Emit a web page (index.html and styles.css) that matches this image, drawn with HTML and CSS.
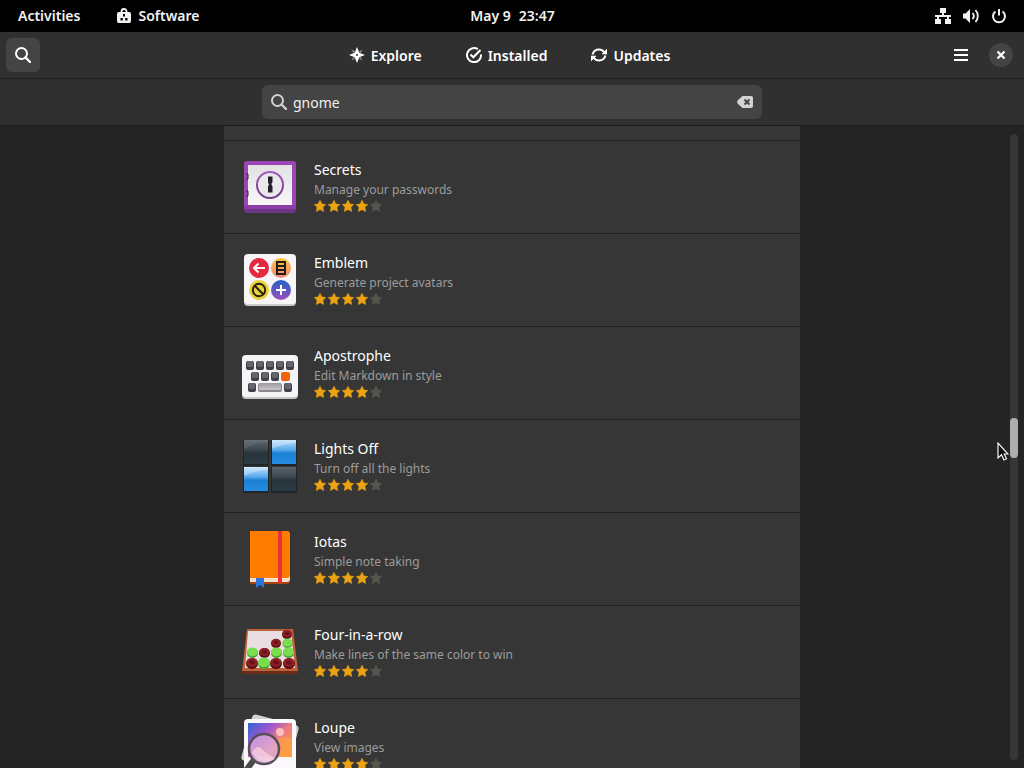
FILE: index.html
```html
<!DOCTYPE html>
<html lang="en">
<head>
<meta charset="utf-8">
<title>Software</title>
<link rel="stylesheet" href="styles.css">
</head>
<body>
<svg class="defs" aria-hidden="true">
  <defs>
    <symbol id="star" viewBox="0 0 12 12"><path stroke-width=".6" stroke-linejoin="round" d="M6 .3l1.900 3.700 3.900.5-2.900 2.800.8 4.200L6 9.600l-3.700 1.900.8-4.200L.2 4.500l3.900-.5z"/></symbol>
    <symbol id="stars" viewBox="0 0 68 12">
      <use href="#star" x="0" width="12" height="12" fill="#eca312" stroke="#eca312"/>
      <use href="#star" x="14" width="12" height="12" fill="#eca312" stroke="#eca312"/>
      <use href="#star" x="28" width="12" height="12" fill="#eca312" stroke="#eca312"/>
      <use href="#star" x="42" width="12" height="12" fill="#eca312" stroke="#eca312"/>
      <use href="#star" x="56" width="12" height="12" fill="#54574d" stroke="#54574d"/>
    </symbol>
    <symbol id="search" viewBox="0 0 16 16"><circle cx="6.5" cy="6.5" r="5.5" fill="none" stroke="currentColor" stroke-width="2"/><path d="M10.5 10.5L15 15" stroke="currentColor" stroke-width="2.4" stroke-linecap="round"/></symbol>
    <linearGradient id="darkTile" x2="0" y2="1"><stop offset="0" stop-color="#59646d"/><stop offset=".4" stop-color="#3d4850"/><stop offset=".55" stop-color="#28343c"/><stop offset="1" stop-color="#2d3b44"/></linearGradient>
    <linearGradient id="blueTile" x2="0" y2="1"><stop offset="0" stop-color="#b9dcfa"/><stop offset=".4" stop-color="#5cabec"/><stop offset=".55" stop-color="#1c80d2"/><stop offset="1" stop-color="#258be0"/></linearGradient>
    <linearGradient id="plusFill" x2="0" y2="1"><stop offset="0" stop-color="#2162c4"/><stop offset="1" stop-color="#9a50bd"/></linearGradient>
    <linearGradient id="listFill" x2="0" y2="1"><stop offset="0" stop-color="#f3c83c"/><stop offset="1" stop-color="#f4857e"/></linearGradient>
    <linearGradient id="paper" x2="0" y2="1"><stop offset="0" stop-color="#e4e0e4"/><stop offset="1" stop-color="#f8f6f7"/></linearGradient>
    <linearGradient id="ring" x2="0" y2="1"><stop offset="0" stop-color="#a35bbf"/><stop offset="1" stop-color="#6c3a86"/></linearGradient>
    <linearGradient id="spacebar" x2="0" y2="1"><stop offset="0" stop-color="#9c9a9e"/><stop offset="1" stop-color="#c9c7ca"/></linearGradient>
    <linearGradient id="photo" x2="1" y2=".75"><stop offset="0" stop-color="#2f66d6"/><stop offset=".4" stop-color="#a357cc"/><stop offset=".65" stop-color="#ed7c84"/><stop offset="1" stop-color="#ff9a3d"/></linearGradient>
    <symbol id="key" viewBox="0 0 8 9"><rect width="8" height="9" rx="2" fill="#414047"/><rect x="1" width="6" height="6" rx="1.5" fill="#66656c"/></symbol>
    <symbol id="red" viewBox="0 0 10 10"><ellipse cx="5" cy="5.5" rx="5" ry="4.5" fill="#5c0d13"/><ellipse cx="5" cy="4.5" rx="4.6" ry="3.7" fill="#8f2028"/><ellipse cx="5" cy="4.5" rx="2.4" ry="1.8" fill="#6b1219"/></symbol>
    <symbol id="green" viewBox="0 0 10 10"><ellipse cx="5" cy="5.5" rx="5" ry="4.5" fill="#48a32c"/><ellipse cx="5" cy="4.5" rx="5" ry="4" fill="#79dd4e"/></symbol>
  </defs>
</svg>

<header class="topbar">
  <div class="topbar-side">
    <button class="panel-button">Activities</button>
    <button class="panel-button">
      <svg class="icon" viewBox="0 0 16 16"><path d="M5.500 5V3.500a2.500 2.500 0 0 1 5 0V5" fill="none" stroke="#f2f2f2" stroke-width="1.800"/><path d="M3 4h10a2 2 0 0 1 2 2v7a2 2 0 0 1-2 2H3a2 2 0 0 1-2-2V6a2 2 0 0 1 2-2z" fill="#f2f2f2"/><path d="M7 6h2v2.500H7zM4.500 10h2.300v2.500H4.500zM9.200 10h2.300v2.500H9.200z"/></svg>
      Software
    </button>
  </div>
  <button class="panel-button clock"><span>May 9</span><span>23:47</span></button>
  <div class="topbar-side topbar-end">
    <button class="status" aria-label="System menu">
      <svg class="icon" viewBox="0 0 16 16" fill="#f2f2f2"><path d="M5 0h6v5H9v2h5v4h2v5h-6v-5h2V9H4v2h2v5H0v-5h2V9H0V7h7V5H5z"/><path d="M12 7h4v2h-4z"/></svg>
      <svg class="icon" viewBox="0 0 16 16"><path d="M0 5.500h2.500L7 1v14l-4.500-4.500H0z" fill="#f2f2f2"/><path d="M9.500 5a4.500 4.500 0 0 1 0 6M12.500 2a9 9 0 0 1 0 12" fill="none" stroke="#f2f2f2" stroke-width="1.800"/></svg>
      <svg class="icon" viewBox="0 0 16 16" fill="none" stroke="#f2f2f2" stroke-width="2"><path d="M4.500 3.500a6 6 0 1 0 7 0M8 1v6.500"/></svg>
    </button>
  </div>
</header>

<header class="headerbar">
  <div class="header-side"><button class="search-toggle" aria-label="Search"><svg class="icon"><use href="#search"/></svg></button></div>
  <nav class="tabs">
    <button class="tab"><svg class="icon" viewBox="0 0 16 16" fill="#fff"><path fill-rule="evenodd" d="M8 0l2.300 5.700L16 8l-5.700 2.300L8 16l-2.300-5.700L0 8l5.700-2.300zM8 7a1 1 0 1 0 0 2 1 1 0 0 0 0-2z"/><path opacity=".5" d="M2.500 2.500l3.500 2-1.500 1.500zM13.500 2.500l-3.500 2L11.500 6zM2.500 13.500l3.500-2L4.500 10zM13.500 13.500l-3.500-2 1.500-1.500z"/></svg>Explore</button>
    <button class="tab"><svg class="icon" viewBox="0 0 16 16" fill="none" stroke="#fff" stroke-width="2"><path d="M11.800 2.200A7 7 0 1 0 15 7.500"/><path d="M4.500 7.500L7.300 10.300 14.500 3"/></svg>Installed</button>
    <button class="tab"><svg class="icon" viewBox="0 0 16 16"><path d="M1.500 7.500C2.500 4 5 2.500 8 2.500c2.300 0 4 1 5.200 2.800M14.500 8.500c-1 3.500-3.500 5-6.500 5-2.300 0-4-1-5.200-2.800" fill="none" stroke="#fff" stroke-width="2"/><path d="M16 2v5h-5zM0 14V9h5z" fill="#fff" stroke="#fff" stroke-width=".6"/></svg>Updates</button>
  </nav>
  <div class="header-side header-end">
    <button class="menu" aria-label="Menu"><svg class="icon" viewBox="0 0 16 16"><path d="M1 2h14v2H1zM1 7h14v2H1zM1 12h14v2H1z" fill="#fff"/></svg></button>
    <button class="close" aria-label="Close"><svg class="icon" viewBox="0 0 16 16"><path d="M4.500 4.500l7 7M11.500 4.500l-7 7" stroke="#fff" stroke-width="2.200"/></svg></button>
  </div>
</header>

<div class="searchbar">
  <label class="entry">
    <svg class="icon"><use href="#search"/></svg>
    <input type="text" value="gnome" aria-label="Search apps">
    <button class="clear" aria-label="Clear"><svg class="icon" viewBox="0 0 16 16"><path d="M5.500 2H14a2 2 0 0 1 2 2v8a2 2 0 0 1-2 2H5.500L1 10a3 3 0 0 1 0-4z" fill="#d2d2d2"/><path d="M7.500 5.500l5 5M12.500 5.500l-5 5" stroke="#444" stroke-width="2"/></svg></button>
  </label>
</div>

<main class="results">
  <ul class="list">
    <li class="row row-tail"></li>
    <li class="row"><a class="app" href="#secrets">
      <svg class="app-icon" viewBox="0 0 64 64"><rect x="6" y="8" width="52" height="50" rx="3" fill="#6d3487"/><rect x="6" y="6" width="52" height="48" rx="3" fill="#9c45b7"/><path d="M10 10h44v40H10z" fill="url(#paper)"/><path d="M6 50h52v4H6z" fill="#8a3ea6"/><circle cx="32" cy="30" r="13" fill="#ebe8eb" stroke="url(#ring)" stroke-width="2"/><path d="M30 21.500h4.500v5.500l-1.200 2 1.200 2.500v6H30v-6l1-2-1-2z" fill="#242228"/><path d="M8 19h2v5H8M8 36h2v5H8" fill="none" stroke="#312239" stroke-width="1"/></svg>
      <div class="text"><h2>Secrets</h2><p>Manage your passwords</p><svg class="stars" role="img" aria-label="4 of 5 stars"><use href="#stars"/></svg></div></a></li>
    <li class="row"><a class="app" href="#emblem">
      <svg class="app-icon" viewBox="0 0 64 64"><rect x="6" y="8" width="52" height="50" rx="4" fill="#cfcacf"/><rect x="6" y="6" width="52" height="50" rx="4" fill="#f8f5f6"/><circle cx="21" cy="20" r="10" fill="#e3283f"/><path d="M27 20H16M20.500 15.500L16 20l4.500 4.500" fill="none" stroke="#fff" stroke-width="2"/><circle cx="43" cy="20" r="10" fill="url(#listFill)"/><path d="M39 14h8v12h-8zM39 18h8M39 22h8" fill="none" stroke="#261b13" stroke-width="2"/><circle cx="21" cy="42" r="10" fill="#e9d33b"/><circle cx="21" cy="42" r="6.200" fill="none" stroke="#29200d" stroke-width="2"/><path d="M16.500 37.500l9 9" stroke="#29200d" stroke-width="2"/><circle cx="43" cy="42" r="10" fill="url(#plusFill)"/><path d="M43 37v10M38 42h10" stroke="#fff" stroke-width="2"/></svg>
      <div class="text"><h2>Emblem</h2><p>Generate project avatars</p><svg class="stars" role="img" aria-label="4 of 5 stars"><use href="#stars"/></svg></div></a></li>
    <li class="row"><a class="app" href="#apostrophe">
      <svg class="app-icon" viewBox="0 0 64 64"><rect x="4" y="16" width="56" height="42" rx="4" fill="#c8c5c8"/><rect x="4" y="14" width="56" height="42" rx="4" fill="#f6f4f6"/><use href="#key" x="8" y="20" width="8" height="9"/><use href="#key" x="18" y="20" width="8" height="9"/><use href="#key" x="28" y="20" width="8" height="9"/><use href="#key" x="38" y="20" width="8" height="9"/><use href="#key" x="48" y="20" width="8" height="9"/><use href="#key" x="13" y="31" width="8" height="9"/><use href="#key" x="23" y="31" width="8" height="9"/><use href="#key" x="33" y="31" width="8" height="9"/><rect x="43" y="31" width="9" height="9" rx="2" fill="#f06407"/><use href="#key" x="10" y="42" width="8" height="9"/><rect x="20" y="42" width="24" height="9" rx="2" fill="#89878b"/><rect x="21" y="42" width="22" height="7" rx="1" fill="url(#spacebar)"/><use href="#key" x="46" y="42" width="8" height="9"/></svg>
      <div class="text"><h2>Apostrophe</h2><p>Edit Markdown in style</p><svg class="stars" role="img" aria-label="4 of 5 stars"><use href="#stars"/></svg></div></a></li>
    <li class="row"><a class="app" href="#lights-off">
      <svg class="app-icon" viewBox="0 0 64 64"><path d="M5 6h26v26H5zM33 6h26v26H33zM5 33h26v26H5zM33 33h26v26H33z" fill="#1f2529"/><rect x="6" y="6" width="24" height="24" fill="url(#darkTile)"/><rect x="34" y="6" width="24" height="24" fill="url(#blueTile)"/><rect x="6" y="33" width="24" height="24" fill="url(#blueTile)"/><rect x="34" y="33" width="24" height="24" fill="url(#darkTile)"/><path d="M34 6h24v3q-14 1-24 6zM6 33h24v3q-14 1-24 6z" fill="#fff" opacity=".3"/><path d="M6 6h24v2q-14 1-24 7z" fill="#fff" opacity=".08"/></svg>
      <div class="text"><h2>Lights Off</h2><p>Turn off all the lights</p><svg class="stars" role="img" aria-label="4 of 5 stars"><use href="#stars"/></svg></div></a></li>
    <li class="row"><a class="app" href="#iotas">
      <svg class="app-icon" viewBox="0 0 64 64"><path d="M12 49h40v4a3 3 0 0 1-3 3H12z" fill="#f3dfc8"/><path d="M12 4h37a3 3 0 0 1 3 3v42a3 3 0 0 1-3 2H12z" fill="#ff7c00"/><path d="M12 55h37q3 0 3-3v2q0 3-3 3H12z" fill="#a8420c"/><path d="M40 4h4v52h-4z" fill="#ed303b"/><path d="M18 51h8v10l-4-3-4 3z" fill="#2c73dd"/></svg>
      <div class="text"><h2>Iotas</h2><p>Simple note taking</p><svg class="stars" role="img" aria-label="4 of 5 stars"><use href="#stars"/></svg></div></a></li>
    <li class="row"><a class="app" href="#four-in-a-row">
      <svg class="app-icon" viewBox="0 0 64 64"><path d="M9 10h46l5 42v2H4v-2z" fill="#6a2d1a"/><path d="M9 9h46l5 42H4z" fill="#bd6238"/><path d="M10 11h43l4 37H7z" fill="#e9dfe3"/><g><use href="#red" x="44" y="9" width="10" height="10"/><use href="#red" x="33" y="18" width="10" height="10"/><use href="#green" x="44" y="18" width="11" height="10"/><use href="#green" x="9" y="27" width="11" height="11"/><use href="#red" x="21" y="27" width="11" height="11"/><use href="#green" x="33" y="27" width="11" height="11"/><use href="#green" x="45" y="27" width="11" height="11"/><use href="#red" x="8" y="37" width="12" height="12"/><use href="#green" x="20" y="37" width="12" height="12"/><use href="#red" x="32" y="37" width="12" height="12"/><use href="#red" x="45" y="37" width="12" height="12"/></g></svg>
      <div class="text"><h2>Four-in-a-row</h2><p>Make lines of the same color to win</p><svg class="stars" role="img" aria-label="4 of 5 stars"><use href="#stars"/></svg></div></a></li>
    <li class="row"><a class="app" href="#loupe">
      <svg class="app-icon" viewBox="0 0 64 64"><rect x="8" y="6" width="48" height="48" rx="4" fill="#d3d1d3" transform="rotate(15 32 30)"/><rect x="6" y="6" width="52" height="52" rx="4" fill="#faf8fa"/><path d="M10 10h44v34H10z" fill="url(#photo)"/><circle cx="42" cy="19" r="4" fill="#fbc0bd"/><path d="M26 44q12-26 28-18v18z" fill="#ffa245" opacity=".6"/><path d="M15 48L6 60" stroke="#4b4a4d" stroke-width="6" stroke-linecap="round"/><circle cx="26" cy="36" r="15" fill="#d8a9dc" fill-opacity=".8" stroke="#555057" stroke-width="2.500"/><path d="M14 40q5-11 12-2l11 8q-12 8-23-6z" fill="#f8d6de" opacity=".7"/></svg>
      <div class="text"><h2>Loupe</h2><p>View images</p><svg class="stars" role="img" aria-label="4 of 5 stars"><use href="#stars"/></svg></div></a></li>
  </ul>
  <div class="scrollbar"><div class="thumb"></div></div>
</main>
<svg class="pointer" viewBox="0 0 12 19"><path d="M1 1v15l3.500-3.200L7 18l2.500-1.200L7.200 12H11z" fill="#111" stroke="#f4f4f4" stroke-width="1.200"/></svg>
</body>
</html>
```
FILE: styles.css
```css
* { box-sizing: border-box; }

body {
  margin: 0;
  height: 100vh;
  display: flex;
  flex-direction: column;
  overflow: hidden;
  background: #242424;
  color: #fff;
  font-family: "Noto Sans", "Open Sans", sans-serif;
  font-size: 14px;
}

button, input {
  font: inherit;
  color: inherit;
  background: none;
  border: 0;
  padding: 0;
  margin: 0;
}

.defs { position: absolute; width: 0; height: 0; }
.icon { width: 16px; height: 16px; flex: none; display: block; }

.topbar {
  display: flex;
  align-items: center;
  flex: none;
  height: 32px;
  padding: 0 17px 1px 18px;
  background: #000;
  color: #f2f2f2;
  font-weight: 600;
}
.topbar-side { flex: 1; display: flex; align-items: center; gap: 36px; }
.topbar-end { justify-content: flex-end; }
.panel-button { display: flex; align-items: center; gap: 6px; }
.clock { gap: 8px; }
.status { display: flex; gap: 12px; }

.headerbar {
  display: flex;
  align-items: center;
  flex: none;
  height: 47px;
  padding: 0 6px;
  background: #303030;
  border-bottom: 1px solid #1f1f1f;
  font-weight: 600;
}
.header-side { flex: 1; display: flex; align-items: center; }
.header-end { justify-content: flex-end; gap: 20px; padding-right: 5px; }
.search-toggle {
  display: grid;
  place-items: center;
  width: 34px;
  height: 34px;
  border-radius: 6px;
  background: #444;
}
.tabs { display: flex; gap: 44px; }
.tab { display: flex; align-items: center; gap: 6px; }
.close {
  display: grid;
  place-items: center;
  width: 24px;
  height: 24px;
  border-radius: 50%;
  background: #444;
}

.searchbar {
  display: flex;
  justify-content: center;
  flex: none;
  padding: 6px;
  background: #303030;
  border-bottom: 1px solid #1b1b1b;
}
.entry {
  display: flex;
  align-items: center;
  gap: 6px;
  width: 100%;
  max-width: 500px;
  height: 34px;
  padding: 0 9px;
  border-radius: 6px;
  background: #444;
  color: #d2d2d2;
}
.entry input { flex: 1; min-width: 0; color: #f0f0f0; outline: 0; }

.results {
  position: relative;
  flex: 1;
  min-height: 0;
  overflow: hidden;
}
.list {
  width: 100%;
  max-width: 576px;
  margin: 0 auto;
  padding: 0;
  list-style: none;
  background: #363636;
}
.row { border-bottom: 1px solid #222; }
.row-tail { height: 15px; }
.app {
  display: flex;
  align-items: center;
  gap: 12px;
  padding: 14px;
  color: inherit;
  text-decoration: none;
}
.app-icon { width: 64px; height: 64px; flex: none; }
.text { display: flex; flex-direction: column; }
.text h2 { margin: 0 0 2px; font-size: 14px; font-weight: 400; line-height: 18px; }
.text p { margin: 0; font-size: 12px; line-height: 18px; color: #9c9c9c; }
.stars { width: 68px; height: 12px; margin: 1px 0; }

.scrollbar {
  position: absolute;
  top: 8px;
  right: 6px;
  bottom: 8px;
  width: 8px;
  border-radius: 4px;
  background: #363636;
}
.thumb {
  height: 40px;
  margin-top: 284px;
  border-radius: 4px;
  background: #adadad;
}
.pointer { position: absolute; left: 997px; top: 442px; width: 12px; height: 19px; }
```
